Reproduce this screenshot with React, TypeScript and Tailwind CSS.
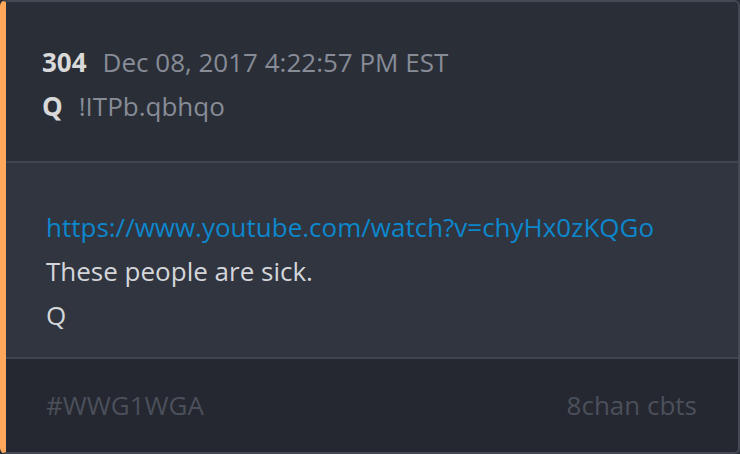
import React from "react";

export default function App() {
  return (
    <div className="w-[740px] h-[454px] bg-[#2a2e37]" style={{ fontFamily: '"Open Sans", sans-serif' }}>
      <div className="w-[740px] h-[454px] flex flex-col overflow-hidden rounded-[6px] border-2 border-[#444953] border-l-[6px] border-l-[#ffa85c]">
        <div className="h-[159px] shrink-0 bg-[#2a2e37] pl-[36px] pt-[38px] text-[26px] leading-[44px]">
          <div className="flex items-center gap-[16px]">
            <span className="font-bold text-[#d9d9d9]">304</span>
            <span className="text-[#878c97]">Dec 08, 2017 4:22:57 PM EST</span>
          </div>
          <div className="flex items-center gap-[16px]">
            <span className="font-bold text-[#d9d9d9]">Q</span>
            <span className="text-[#878c97]">!ITPb.qbhqo</span>
          </div>
        </div>
        <div className="h-[2px] shrink-0 bg-[#40454f]" />
        <div className="h-[194px] shrink-0 bg-[#303540] pl-[40px] pt-[42px] text-[26px] leading-[44px] text-[#d4d6da]">
          <div className="text-[#0d87cc]">https://www.youtube.com/watch?v=chyHx0zKQGo</div>
          <div>These people are sick.</div>
          <div>Q</div>
        </div>
        <div className="h-[2px] shrink-0 bg-[#40454f]" />
        <div className="flex-1 bg-[#252830] flex items-center justify-between pl-[40px] pr-[41px] text-[26px] text-[#4b505b]">
          <span>#WWG1WGA</span>
          <span>8chan cbts</span>
        </div>
      </div>
    </div>
  );
}
